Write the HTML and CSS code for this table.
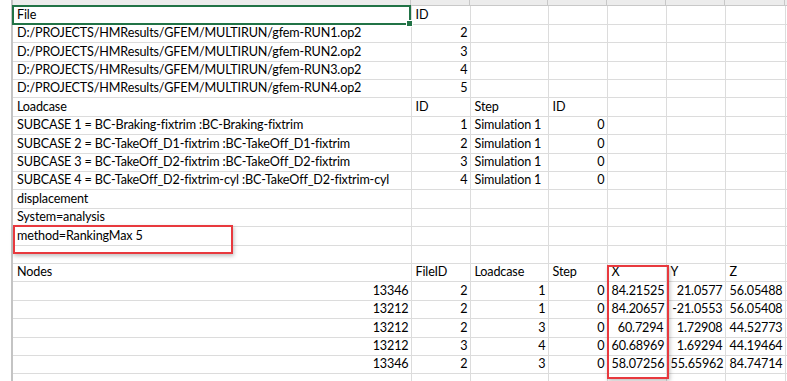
FILE: index.html
```html
<!DOCTYPE html>
<html lang="en">
<head>
  <meta charset="UTF-8" />
  <title>Ranking export</title>
  <link rel="stylesheet" href="styles.css">
</head>
<body>
  <div class="sheet">
    <div class="col-heads">
      <span></span><span></span><span></span><span></span><span></span><span></span><span></span><span></span>
    </div>

    <table class="grid">
      <colgroup>
        <col class="c-a" /><col class="c-b" /><col class="c-c" /><col class="c-d" />
        <col class="c-e" /><col class="c-f" /><col class="c-g" /><col class="c-h" />
      </colgroup>
      <tr><td>File</td><td>ID</td><td></td><td></td><td></td><td></td><td></td><td></td></tr>
      <tr><td>D:/PROJECTS/HMResults/GFEM/MULTIRUN/gfem-RUN1.op2</td><td class="num">2</td><td></td><td></td><td></td><td></td><td></td><td></td></tr>
      <tr><td>D:/PROJECTS/HMResults/GFEM/MULTIRUN/gfem-RUN2.op2</td><td class="num">3</td><td></td><td></td><td></td><td></td><td></td><td></td></tr>
      <tr><td>D:/PROJECTS/HMResults/GFEM/MULTIRUN/gfem-RUN3.op2</td><td class="num">4</td><td></td><td></td><td></td><td></td><td></td><td></td></tr>
      <tr><td>D:/PROJECTS/HMResults/GFEM/MULTIRUN/gfem-RUN4.op2</td><td class="num">5</td><td></td><td></td><td></td><td></td><td></td><td></td></tr>
      <tr><td>Loadcase</td><td>ID</td><td>Step</td><td>ID</td><td></td><td></td><td></td><td></td></tr>
      <tr><td>SUBCASE 1 = BC-Braking-fixtrim :BC-Braking-fixtrim</td><td class="num">1</td><td>Simulation 1</td><td class="num">0</td><td></td><td></td><td></td><td></td></tr>
      <tr><td>SUBCASE 2 = BC-TakeOff_D1-fixtrim :BC-TakeOff_D1-fixtrim</td><td class="num">2</td><td>Simulation 1</td><td class="num">0</td><td></td><td></td><td></td><td></td></tr>
      <tr><td>SUBCASE 3 = BC-TakeOff_D2-fixtrim :BC-TakeOff_D2-fixtrim</td><td class="num">3</td><td>Simulation 1</td><td class="num">0</td><td></td><td></td><td></td><td></td></tr>
      <tr><td>SUBCASE 4 = BC-TakeOff_D2-fixtrim-cyl :BC-TakeOff_D2-fixtrim-cyl</td><td class="num">4</td><td>Simulation 1</td><td class="num">0</td><td></td><td></td><td></td><td></td></tr>
      <tr><td>displacement</td><td></td><td></td><td></td><td></td><td></td><td></td><td></td></tr>
      <tr><td>System=analysis</td><td></td><td></td><td></td><td></td><td></td><td></td><td></td></tr>
      <tr><td>method=RankingMax 5</td><td></td><td></td><td></td><td></td><td></td><td></td><td></td></tr>
      <tr><td></td><td></td><td></td><td></td><td></td><td></td><td></td><td></td></tr>
      <tr><td>Nodes</td><td>FileID</td><td>Loadcase</td><td>Step</td><td>X</td><td>Y</td><td>Z</td><td></td></tr>
      <tr><td class="num">13346</td><td class="num">2</td><td class="num">1</td><td class="num">0</td><td class="num">84.21525</td><td class="num">21.0577</td><td class="num">56.05488</td><td></td></tr>
      <tr><td class="num">13212</td><td class="num">2</td><td class="num">1</td><td class="num">0</td><td class="num">84.20657</td><td class="num">-21.0553</td><td class="num">56.05408</td><td></td></tr>
      <tr><td class="num">13212</td><td class="num">2</td><td class="num">3</td><td class="num">0</td><td class="num">60.7294</td><td class="num">1.72908</td><td class="num">44.52773</td><td></td></tr>
      <tr><td class="num">13212</td><td class="num">3</td><td class="num">4</td><td class="num">0</td><td class="num">60.68969</td><td class="num">1.69294</td><td class="num">44.19464</td><td></td></tr>
      <tr><td class="num">13346</td><td class="num">2</td><td class="num">3</td><td class="num">0</td><td class="num">58.07256</td><td class="num">55.65962</td><td class="num">84.74714</td><td></td></tr>
      <tr><td></td><td></td><td></td><td></td><td></td><td></td><td></td><td></td></tr>
    </table>

    <!-- active cell A1 -->
    <div class="selection"><span class="handle"></span></div>

    <!-- annotations -->
    <div class="mark mark-method"></div>
    <div class="mark mark-x"></div>
  </div>
</body>
</html>
```

FILE: styles.css
```css
body {
  margin: 0;
  background: #fff;
  overflow: hidden;
  font-family: 'Lato', 'Liberation Sans', sans-serif;
  font-size: 12.6px;
  letter-spacing: -0.15px;
  color: #000;
}

.sheet {
  position: relative;
  margin-left: 11px;
  border-left: 2px solid #c4c4c4;
}

/* cut-off column header strip */
.col-heads {
  display: grid;
  grid-template-columns: 398px 59px 78px 59px 59px 59px 60px 40px;
  height: 5px;
  background: #ececec;
  border-bottom: 1px solid #c8c8c8;
}
.col-heads span {
  border-right: 1px solid #c8c8c8;
}

.grid {
  border-collapse: collapse;
  table-layout: fixed;
  width: 812px;
}
.c-a { width: 398px; }
.c-b { width: 59px; }
.c-c { width: 78px; }
.c-d { width: 59px; }
.c-e { width: 59px; }
.c-f { width: 59px; }
.c-g { width: 60px; }
.c-h { width: 40px; }

.grid td {
  height: 18.4px;
  padding: 0 2px 2px 4px;
  box-sizing: border-box;
  border-right: 1px solid #dcdcdc;
  border-bottom: 1px solid #dcdcdc;
  line-height: 14px;
  vertical-align: bottom;
  white-space: nowrap;
  overflow: visible;
}
.grid td.num {
  text-align: right;
}

.selection {
  position: absolute;
  left: -1px;
  top: 5px;
  width: 399px;
  height: 20px;
  border: 2px solid #217346;
  box-sizing: border-box;
}
.selection .handle {
  position: absolute;
  right: -4px;
  bottom: -4px;
  width: 5px;
  height: 5px;
  background: #217346;
  border: 1px solid #fff;
}

.mark {
  position: absolute;
  border: 2px solid #e8393e;
  box-sizing: border-box;
  box-shadow: 1px 2px 4px rgba(0, 0, 0, 0.25);
}
.mark-method {
  left: 0;
  top: 225px;
  width: 220px;
  height: 29px;
}
.mark-x {
  left: 594px;
  top: 265px;
  width: 62px;
  height: 114px;
}
```
